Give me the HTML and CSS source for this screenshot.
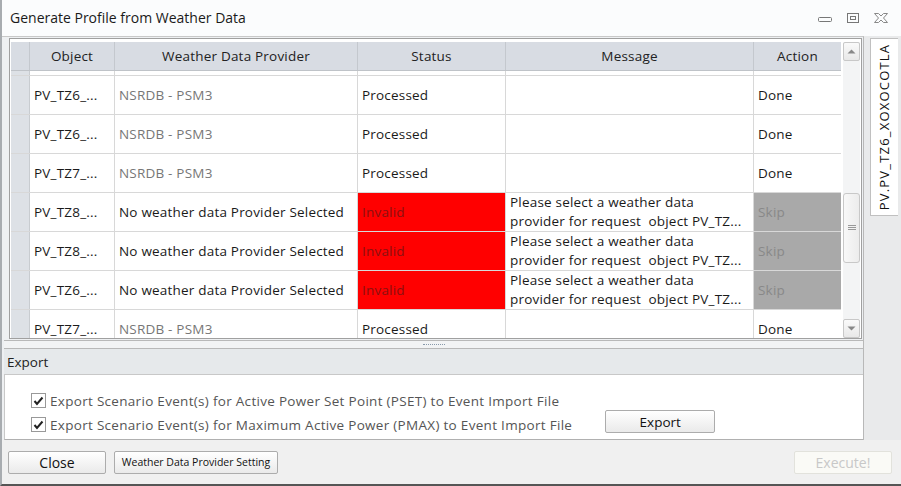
FILE: index.html
```html
<!DOCTYPE html>
<html>
<head>
<meta charset="utf-8">
<link rel="stylesheet" href="styles.css">
</head>
<body>
<div class="window">
  <div class="titlebar">
    <span class="title">Generate Profile from Weather Data</span>
    <div class="winbtns">
      <svg width="16" height="10" viewBox="0 0 16 10"><rect x="1.5" y="4.5" width="13" height="4" rx="1" fill="none" stroke="#777"/></svg>
      <svg width="14" height="12" viewBox="0 0 14 12"><rect x="1.5" y="1.5" width="11" height="9" fill="none" stroke="#777"/><rect x="4.5" y="4.5" width="5" height="3" fill="none" stroke="#777"/></svg>
      <svg width="16" height="12" viewBox="0 0 16 12"><path d="M1.5 1.5 L5.5 1.5 L8 4 L10.5 1.5 L14.5 1.5 L10.5 6 L14.5 10.5 L10.5 10.5 L8 8 L5.5 10.5 L1.5 10.5 L5.5 6 Z" fill="none" stroke="#888"/></svg>
    </div>
  </div>
  <div class="body">
    <div class="leftcol">
      <div class="gridbox">
        <div class="grid">
          <div class="hrow">
            <div class="gut"></div>
            <div class="h c-obj">Object</div>
            <div class="h c-wdp">Weather Data Provider</div>
            <div class="h c-st">Status</div>
            <div class="h c-msg">Message</div>
            <div class="h c-act">Action</div>
          </div>
          <div class="rows">
            <div class="row partial"><div class="gut"></div><div class="c c-obj"></div><div class="c c-wdp"></div><div class="c c-st"></div><div class="c c-msg"></div><div class="c c-act"></div></div>
            <div class="row"><div class="gut"></div><div class="c c-obj">PV_TZ6_...</div><div class="c c-wdp grey">NSRDB - PSM3</div><div class="c c-st">Processed</div><div class="c c-msg"></div><div class="c c-act">Done</div></div>
            <div class="row"><div class="gut"></div><div class="c c-obj">PV_TZ6_...</div><div class="c c-wdp grey">NSRDB - PSM3</div><div class="c c-st">Processed</div><div class="c c-msg"></div><div class="c c-act">Done</div></div>
            <div class="row"><div class="gut"></div><div class="c c-obj">PV_TZ7_...</div><div class="c c-wdp grey">NSRDB - PSM3</div><div class="c c-st">Processed</div><div class="c c-msg"></div><div class="c c-act">Done</div></div>
            <div class="row"><div class="gut"></div><div class="c c-obj">PV_TZ8_...</div><div class="c c-wdp">No weather data Provider Selected</div><div class="c c-st invalid">Invalid</div><div class="c c-msg msg">Please select a weather data<br>provider for request&nbsp; object PV_TZ...</div><div class="c c-act skip">Skip</div></div>
            <div class="row"><div class="gut"></div><div class="c c-obj">PV_TZ8_...</div><div class="c c-wdp">No weather data Provider Selected</div><div class="c c-st invalid">Invalid</div><div class="c c-msg msg">Please select a weather data<br>provider for request&nbsp; object PV_TZ...</div><div class="c c-act skip">Skip</div></div>
            <div class="row"><div class="gut"></div><div class="c c-obj">PV_TZ6_...</div><div class="c c-wdp">No weather data Provider Selected</div><div class="c c-st invalid">Invalid</div><div class="c c-msg msg">Please select a weather data<br>provider for request&nbsp; object PV_TZ...</div><div class="c c-act skip">Skip</div></div>
            <div class="row"><div class="gut"></div><div class="c c-obj">PV_TZ7_...</div><div class="c c-wdp grey">NSRDB - PSM3</div><div class="c c-st">Processed</div><div class="c c-msg"></div><div class="c c-act">Done</div></div>
          </div>
        </div>
        <div class="vscroll">
          <div class="sbtn"><svg width="9" height="5" viewBox="0 0 9 5"><path d="M0.5 4.5 L4.5 0.5 L8.5 4.5 Z" fill="#888"/></svg></div>
          <div class="track">
            <div class="thumb"><svg width="8" height="6" viewBox="0 0 8 6"><path d="M0 0.5H8M0 2.5H8M0 4.5H8" stroke="#999"/></svg></div>
          </div>
          <div class="sbtn"><svg width="9" height="5" viewBox="0 0 9 5"><path d="M0.5 0.5 L4.5 4.5 L8.5 0.5 Z" fill="#888"/></svg></div>
        </div>
      </div>
      <div class="splitter"><span class="dots"></span></div>
      <div class="exporthead">Export</div>
      <div class="exportbody">
        <div class="checks">
          <label class="chk"><span class="box"><svg width="11" height="10" viewBox="0 0 11 10"><path d="M1.5 5 L4 8 L9.5 1.5" fill="none" stroke="#222" stroke-width="2"/></svg></span>Export Scenario Event(s) for Active Power Set Point (PSET) to Event Import File</label>
          <label class="chk"><span class="box"><svg width="11" height="10" viewBox="0 0 11 10"><path d="M1.5 5 L4 8 L9.5 1.5" fill="none" stroke="#222" stroke-width="2"/></svg></span>Export Scenario Event(s) for Maximum Active Power (PMAX) to Event Import File</label>
        </div>
        <button class="btn exportbtn">Export</button>
      </div>
    </div>
    <div class="rightcol">
      <div class="vtab"><span>PV.PV_TZ6_XOXOCOTLA</span></div>
    </div>
  </div>
  <div class="footer">
    <button class="btn closebtn">Close</button>
    <button class="btn wdpbtn">Weather Data Provider Setting</button>
    <span class="spacer"></span>
    <button class="btn execbtn">Execute!</button>
  </div>
</div>
</body>
</html>
```

FILE: styles.css
```css
html, body {
  margin: 0;
  padding: 0;
  width: 901px;
  height: 486px;
  overflow: hidden;
  background: #f0f0f0;
  font-family: "Open Sans", "DejaVu Sans", sans-serif;
}

.window {
  width: 901px;
  height: 486px;
  box-sizing: border-box;
  border-left: 2px solid #a8acb0;
  border-bottom: 2px solid #555;
  display: flex;
  flex-direction: column;
  background: #eceef0;
}

.titlebar {
  height: 36px;
  flex: none;
  display: flex;
  align-items: center;
  justify-content: space-between;
  background: #fbfcfd;
  padding: 0 0 0 8px;
}

.title {
  font-size: 14px;
  color: #1a1a1a;
  margin-top: -2px;
}

.winbtns {
  display: flex;
  align-items: center;
  gap: 13px;
  padding-right: 12px;
}

.body {
  flex: 1;
  display: flex;
  min-height: 0;
}

.leftcol {
  width: 864px;
  display: flex;
  flex-direction: column;
  border-top: 1px solid #c8c8c8;
  border-right: 1px solid #b8b8b8;
  box-sizing: border-box;
  padding-left: 2px;
  background: #eef0f2;
}

.gridbox {
  margin: 1px 0 0 5px;
  height: 301px;
  border: 1px solid #a0a0a0;
  background: #fff;
  display: flex;
  box-sizing: border-box;
  padding: 3px 1px 0 1px;
  width: 853px;
}

.grid {
  width: 831px;
  overflow: hidden;
  display: flex;
  flex-direction: column;
}

.hrow {
  display: grid;
  grid-template-columns: 19px 85px 243px 148px 248px 88px;
  height: 29px;
  flex: none;
  background: #d8dce3;
  border-bottom: 1px solid #bfc3c8;
  box-sizing: border-box;
}

.hrow .gut {
  background: #d8dce3;
  border-right: 1px solid #c4c8ce;
}

.h {
  font-size: 13.5px;
  letter-spacing: 0.2px;
  color: #222;
  display: flex;
  align-items: center;
  justify-content: center;
  border-right: 1px solid #c4c8ce;
}

.rows {
  flex: 1;
  overflow: hidden;
}

.row {
  display: grid;
  grid-template-columns: 19px 85px 243px 148px 248px 88px;
  height: 39px;
  border-bottom: 1px solid #d8d8d8;
  box-sizing: border-box;
}

.row.partial {
  height: 5px;
}

.row .gut {
  background: #dde1e6;
  border-right: 1px solid #c8ccd0;
}

.c {
  font-size: 13.5px;
  letter-spacing: 0.2px;
  color: #1a1a1a;
  display: flex;
  align-items: center;
  padding-left: 4px;
  border-right: 1px solid #d8d8d8;
  white-space: nowrap;
  overflow: hidden;
}

.c.grey {
  color: #777;
}

.c.invalid {
  background: #ff0000;
  color: #8a1010;
}

.c.skip {
  background: #a9a9a9;
  color: #888;
}

.c.msg {
  line-height: 19px;
}

.vscroll {
  width: 17px;
  margin-left: 2px;
  display: flex;
  flex-direction: column;
  background: #f3f4f5;
}

.sbtn {
  height: 19px;
  box-sizing: border-box;
  border: 1px solid #c8c8c8;
  border-radius: 2px;
  background: linear-gradient(#fafafa, #e8e8e8);
  display: flex;
  align-items: center;
  justify-content: center;
  flex: none;
}

.track {
  flex: 1;
  padding-top: 132px;
}

.thumb {
  height: 70px;
  box-sizing: border-box;
  border: 1px solid #c8c8c8;
  border-radius: 3px;
  background: linear-gradient(90deg, #f8f8f8, #ececec);
  display: flex;
  align-items: center;
  justify-content: center;
}

.splitter {
  height: 9px;
  display: flex;
  justify-content: center;
  align-items: center;
  border-top: 1px solid #b8b8b8;
  border-bottom: 1px solid #b8b8b8;
  margin-top: 1px;
  box-sizing: border-box;
  background: #f2f3f4;
}

.dots {
  width: 22px;
  border-top: 1px dotted #8899aa;
}

.exporthead {
  height: 26px;
  flex: none;
  background: #e6e9eb;
  font-size: 13.5px;
  color: #222;
  display: flex;
  align-items: center;
  padding-left: 3px;
  border-bottom: 1px solid #c8c8c8;
  box-sizing: border-box;
}

.exportbody {
  flex: 1;
  background: #fff;
  display: flex;
  align-items: flex-end;
  padding: 0 0 6px 26px;
  border-bottom: 1px solid #b0b0b0;
  border-left: 1px solid #c8c8c8;
  gap: 33px;
}

.checks {
  display: flex;
  flex-direction: column;
  gap: 7px;
}

.chk {
  display: flex;
  align-items: center;
  font-size: 13.5px;
  color: #555;
  letter-spacing: 0.3px;
  height: 17px;
}

.box {
  width: 13px;
  height: 13px;
  border: 1px solid #999;
  background: #fff;
  display: flex;
  align-items: center;
  justify-content: center;
  margin-right: 4px;
}

.btn {
  font-family: "Open Sans", "DejaVu Sans", sans-serif;
  font-size: 13.5px;
  color: #111;
  background: linear-gradient(#ffffff, #eaeaea);
  border: 1px solid #acacac;
  border-radius: 2px;
  height: 23px;
  padding: 0;
  white-space: nowrap;
}

.exportbtn {
  width: 110px;
}

.rightcol {
  flex: 1;
  background: #e9eaeb;
  padding: 2px 3px 0 6px;
}

.vtab {
  width: 27px;
  height: 176px;
  background: #fff;
  border: 1px solid #c0c0c0;
  border-right: none;
  display: flex;
  align-items: center;
  justify-content: center;
}

.vtab span {
  transform: rotate(-90deg);
  white-space: nowrap;
  font-size: 13px;
  letter-spacing: 1.2px;
  color: #111;
}

.footer {
  height: 44px;
  flex: none;
  display: flex;
  align-items: center;
  padding: 0 9px 0 6px;
  gap: 8px;
  background: #f0f0f0;
}

.closebtn {
  width: 98px;
  font-size: 14px;
}

.wdpbtn {
  width: 164px;
  font-size: 10.5px;
}

.spacer {
  flex: 1;
}

.execbtn {
  width: 98px;
  color: #c8c8c8;
  background: #fafaf6;
  border-color: #e2e2dc;
  font-size: 14px;
}
```
